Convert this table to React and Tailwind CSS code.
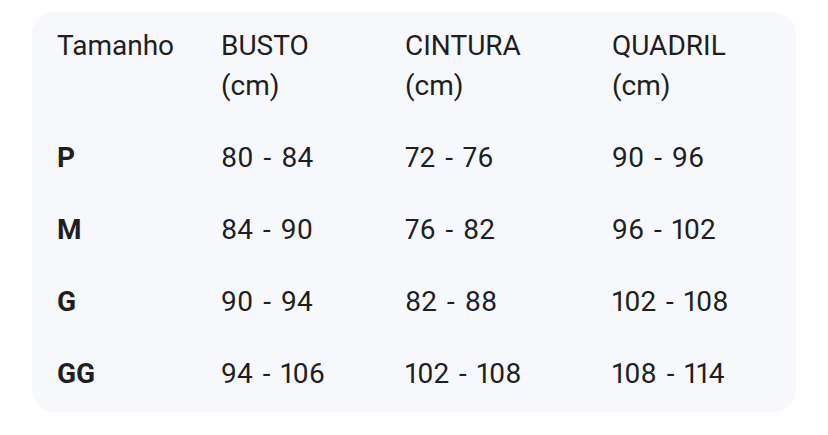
const header = ['Tamanho', 'BUSTO (cm)', 'CINTURA (cm)', 'QUADRIL (cm)'];

const rows = [
  ['P', '80 - 84', '72 - 76', '90 - 96'],
  ['M', '84 - 90', '76 - 82', '96 - 102'],
  ['G', '90 - 94', '82 - 88', '102 - 108'],
  ['GG', '94 - 106', '102 - 108', '108 - 114'],
];

export default function App() {
  return (
    <div className="w-[828px] h-[435px] bg-white pt-3 pl-8 font-['Roboto',sans-serif] text-[#1f1f1f]">
      <div className="w-[764px] h-[400px] rounded-[22px] bg-[#f7f8fc] pl-[25px] pt-[14px]">
        <div className="grid grid-cols-[164px_184px_207px_1fr] text-[28px] leading-[40px] [word-spacing:3px] proportional-nums">
          <div className="pb-4">Tamanho</div>
          {header.slice(1).map((h) => (
            <div key={h} className="pb-4 w-[150px]">
              {h.split(' ')[0]}
              <br />
              (cm)
            </div>
          ))}
          {rows.map((r) => (
            <>
              <div key={r[0]} className="py-4 font-bold">{r[0]}</div>
              <div className="py-4">{r[1]}</div>
              <div className="py-4">{r[2]}</div>
              <div className="py-4">{r[3]}</div>
            </>
          ))}
        </div>
      </div>
    </div>
  );
}
